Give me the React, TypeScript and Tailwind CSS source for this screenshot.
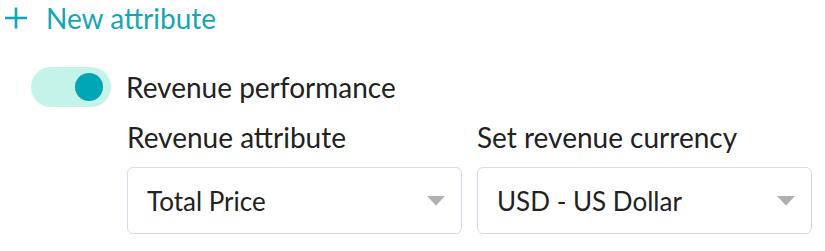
import React from "react";

function Select({ value }: { value: string }) {
  return (
    <div className="flex h-[67px] w-[335px] items-center justify-between rounded-[6px] border-[1.5px] border-[#d5dbe9] bg-white pl-[19px] pr-[16px]">
      <span className="text-[26px] leading-[34px] text-[#222222]">{value}</span>
      <svg width="18" height="10" viewBox="0 0 18 10" className="mt-[1px]">
        <polygon points="0,0 18,0 9,9.5" fill="#b0b0b0" />
      </svg>
    </div>
  );
}

export default function App() {
  return (
    <div className="h-[251px] w-[825px] overflow-hidden bg-white font-['Lato',sans-serif] text-[#222222]">
      <div className="flex h-[36px] items-center gap-[19px] pl-[5px]">
        <svg width="22" height="22" viewBox="0 0 22 22">
          <line x1="11" y1="0.5" x2="11" y2="21.5" stroke="#12a5b5" strokeWidth="2.6" />
          <line x1="0" y1="11" x2="22" y2="11" stroke="#12a5b5" strokeWidth="2.6" />
        </svg>
        <span className="text-[28px] leading-[36px] text-[#14a6b5]">New attribute</span>
      </div>

      <div className="mt-[31px] flex h-[40px] items-center gap-[15px] pl-[31px]">
        <div className="flex h-[40px] w-[80px] items-center justify-end rounded-full bg-[#c4f3e9] pr-[8px]">
          <div className="h-[28px] w-[28px] rounded-full bg-[#00a6b6]" />
        </div>
        <span className="text-[28px] leading-[36px]">Revenue performance</span>
      </div>

      <div className="mt-[12px] flex gap-[15px] pl-[127px]">
        <div className="flex flex-col gap-[12px]">
          <span className="text-[28px] leading-[36px]">Revenue attribute</span>
          <Select value="Total Price" />
        </div>
        <div className="flex flex-col gap-[12px]">
          <span className="text-[28px] leading-[36px]">Set revenue currency</span>
          <Select value="USD - US Dollar" />
        </div>
      </div>
    </div>
  );
}
